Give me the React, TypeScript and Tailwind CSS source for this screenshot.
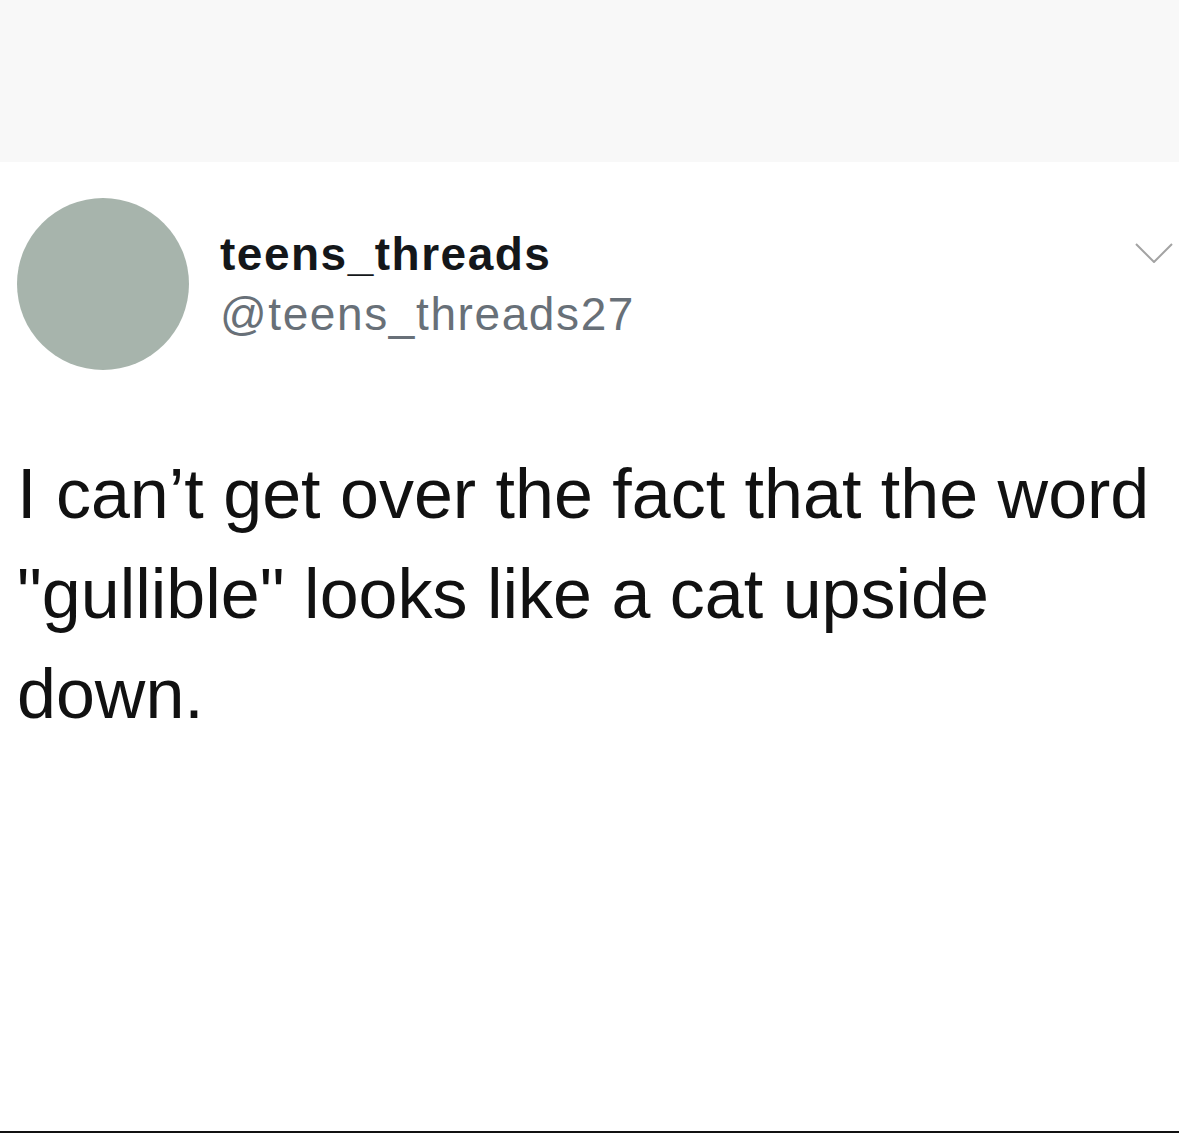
export default function App() {
  return (
    <div
      className="flex h-[1133px] w-full flex-col overflow-hidden border-b-2 border-[#111] bg-white"
      style={{ fontFamily: '"Liberation Sans", Arial, sans-serif' }}
    >
      <div className="h-[162px] w-full bg-[#f8f8f8]" />

      <div className="mt-[36px] flex items-start pl-[17px] pr-[6px]">
        <div className="h-[172px] w-[172px] shrink-0 rounded-full bg-[#a7b4ac]" />
        <div className="ml-[31px] mt-[26px] flex flex-col">
          <span className="text-[46px] font-bold leading-[60px] tracking-[1.5px] text-[#14171a]">
            teens_threads
          </span>
          <span className="text-[46px] leading-[60px] tracking-[1.6px] text-[#687078]">
            @teens_threads27
          </span>
        </div>
        <svg
          className="ml-auto mt-[45px] h-[20px] w-[38px]"
          viewBox="0 0 38 20"
          fill="none"
          stroke="#a3a3a3"
          strokeWidth="2"
        >
          <polyline points="1,1 19,19 37,1" />
        </svg>
      </div>

      <p className="mt-[74px] pl-[17px] pr-[20px] text-[70px] leading-[100px] text-[#111]">
        I can’t get over the fact that the word "gullible" looks like a cat upside down.
      </p>
    </div>
  );
}
